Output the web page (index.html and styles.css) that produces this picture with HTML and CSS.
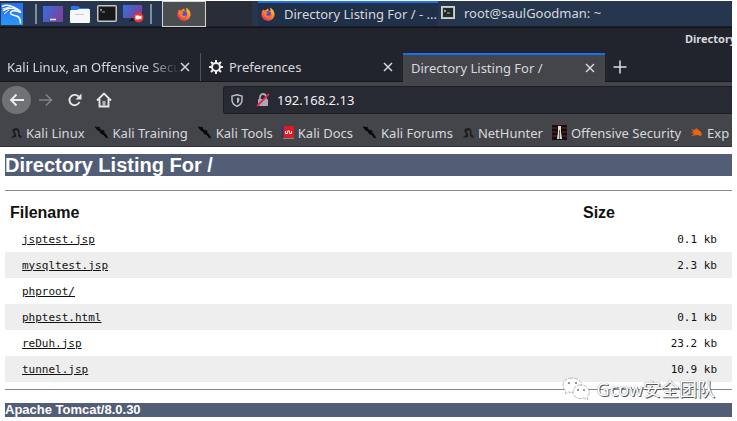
FILE: index.html
```html
<!DOCTYPE html>
<html lang="en">
<head>
<meta charset="utf-8">
<title>Directory Listing For /</title>
<link rel="stylesheet" href="styles.css">
</head>
<body>
<svg class="defs" aria-hidden="true">
  <defs>
    <linearGradient id="screen" x1="0" y1="0" x2="1" y2="0.4"><stop offset="0" stop-color="#3470e0"/><stop offset="1" stop-color="#77459f"/></linearGradient>
    <linearGradient id="kali" x1="0" y1="0" x2="0" y2="1"><stop offset="0" stop-color="#2370ee"/><stop offset="1" stop-color="#2b96fa"/></linearGradient>
    <linearGradient id="flame" x1="1" y1="0" x2="0.2" y2="1"><stop offset="0" stop-color="#ffd83d"/><stop offset="0.45" stop-color="#ff8a25"/><stop offset="1" stop-color="#ef2858"/></linearGradient>
    <symbol id="firefox" viewBox="0 0 14 14"><path d="M2.2 2.5 3.5 3.4 5.2 2.8 7.2 1.2 7.5 3.4 9.5 4.1 9.2.5C12 2 13.8 5 13.6 7.8 13.2 11.5 10.4 13.8 7 13.8 3.4 13.8.4 11 .4 7.3.4 5.4 1.2 3.7 2.2 2.5Z" fill="url(#flame)"/><circle cx="7.2" cy="6.9" r="2.8" fill="#604bc8"/><path d="M2.4 5.2c1.2-.8 2.7-.4 4.3.6L5.2 7c-.4 1.6 1.5 2.6 3.8 1.3-.7 2.3-3.2 2.8-4.9 1.4C2.6 8.5 2.1 6.8 2.4 5.2Z" fill="#ff812d"/></symbol>
    <symbol id="close" viewBox="0 0 10 10"><path d="m1 1 8 8M9 1 1 9" stroke="#d5d6d8" stroke-width="1.5"/></symbol>
    <symbol id="knife" viewBox="0 0 16 16"><path d="m.5 1.5 4 .6L6 4l2 1 1 2 3 2 1.500 2 1.800 3-2.800-.5L10 10.500 7.500 9.500 6 7 3.500 5.500Z" fill="#08090b"/><path d="m5 2 1 2M9 5.500l2 2M10 10l2-1M8 7l4 4" stroke="#08090b" stroke-width="1.500"/></symbol>
    <symbol id="dragon" viewBox="0 0 12 13"><path d="M2 4.500C3.500 2 6 1.200 8 2.500c2 1.500 1.500 4 1.500 6L12 10.500 10.500 12 8 10V6C7.800 3.800 5.500 3.500 4.500 5.500L6 8v3L0 12l3-2 1-2Z" fill="#1b1d21"/></symbol>
  </defs>
</svg>
<div class="desktop">
  <nav class="taskbar" aria-label="Desktop panel">
    <button class="launcher menu" aria-label="Applications"><svg width="22" height="22" viewBox="0 0 22 22"><rect width="22" height="22" fill="url(#kali)"/><path d="M1 3.500C5 1.500 9 2 12 4M2 8C6 4.500 10 5 13 5.500l4 1 3 3-4.500-1.500C11 7 8.500 9 10 11c2 2.200 6 .5 8 3.500 1.500 2 1.500 4 1.500 6" fill="none" stroke="#fff" stroke-width="1.500"/><path d="M1.500 6 9 3.800M3 11l5-4" fill="none" stroke="#fff"/><path d="m11 2.500 4 2 4.500 3.500-6-1.500Z" fill="#fff"/></svg></button>
    <span class="rule"></span>
    <button class="launcher" aria-label="Show desktop"><svg width="20" height="16"><rect width="20" height="16" fill="url(#screen)"/><path d="M7 13.500h6" stroke="#e7eafa" stroke-width="1.500"/></svg></button>
    <button class="launcher" aria-label="Files"><svg width="20" height="18"><path d="M1 8V2q0-1 1-1h6l2 2h9v5" fill="#2d73ef"/><path d="M0 6q0-1 1-1h6l2-1h10q1 0 1 1v12q0 1-1 1H1q-1 0-1-1Z" fill="#f7f7f8"/><path d="M5 9.500h9" stroke="#c7c9cc"/></svg></button>
    <button class="launcher" aria-label="Terminal"><svg width="20" height="17"><rect x=".75" y=".75" width="18.500" height="15.500" rx="1" fill="#171819" stroke="#c5c6c4" stroke-width="1.500"/><path d="m3 4 2 1-2 1M5 7h3" stroke="#a1a3a2" fill="none"/></svg></button>
    <button class="launcher" aria-label="Screen recorder"><svg width="21" height="19"><rect y="1" width="19" height="13" fill="url(#screen)"/><path d="M8 14h4v2h3v1H6v-1h2Z" fill="#17191f"/><circle cx="15.500" cy="13.500" r="5" fill="#ee3030"/><path d="M12.500 11.500h4v1l2-1v4l-2-1v1h-4Z" fill="#fff"/></svg></button>
    <span class="rule second-rule"></span>
    <button class="app-tile" aria-label="Firefox"><svg width="14" height="14"><use href="#firefox"/></svg></button>
    <span class="panel-gap"></span>
    <button class="task active"><svg width="14" height="14"><use href="#firefox"/></svg><span>Directory Listing For / - ...</span></button>
    <button class="task terminal"><svg width="14" height="13"><rect x=".5" y=".5" width="13" height="12" fill="#b8bab7" stroke="#d0d2cf"/><rect x="2" y="2" width="10" height="9" fill="#202a2a"/><path d="m3 4 2 1-2 1M6 7h3" stroke="#b5b9b5" fill="none"/></svg><span>root@saulGoodman: ~</span></button>
  </nav>
  <div class="titlebar">Directory</div>
  <div class="tabs">
    <div class="tab first"><span class="tab-title faded">Kali Linux, an Offensive Secu</span><button aria-label="Close Kali Linux tab"><svg width="10" height="10"><use href="#close"/></svg></button></div>
    <div class="tab second"><svg width="14" height="14" viewBox="0 0 14 14"><path d="M7 0v14M0 7h14M2 2l10 10M12 2 2 12" stroke="#eeeeef" stroke-width="2"/><circle cx="7" cy="7" r="4" fill="#23252e" stroke="#eeeeef" stroke-width="2"/></svg><span class="tab-title">Preferences</span><button aria-label="Close Preferences tab"><svg width="10" height="10"><use href="#close"/></svg></button></div>
    <div class="tab selected"><span class="tab-title">Directory Listing For /</span><button aria-label="Close directory tab"><svg width="10" height="10"><use href="#close"/></svg></button></div>
    <button class="new-tab" aria-label="New tab"><svg width="14" height="14"><path d="M7 .5v13M.5 7h13" stroke="#dcddde" stroke-width="1.500"/></svg></button>
  </div>
  <div class="navigation">
    <button class="nav-button back" aria-label="Back"><svg width="16" height="14"><path d="M15 7H2M7.500 1.500 2 7l5.500 5.500" fill="none" stroke="#eeeeef" stroke-width="1.800"/></svg></button>
    <button class="nav-button" aria-label="Forward"><svg width="16" height="14"><path d="M1 7h12M8 1.500 13.500 7 8 12.500" fill="none" stroke="#818388" stroke-width="1.600"/></svg></button>
    <button class="nav-button" aria-label="Reload"><svg width="16" height="14"><path d="M11.500 3.500A5.200 5.200 0 1 0 12.500 9" fill="none" stroke="#e5e5e6" stroke-width="1.900"/><path d="M14.500.5v6H8.500Z" fill="#e5e5e6"/></svg></button>
    <button class="nav-button" aria-label="Home"><svg width="16" height="16"><path d="m1 8.500 7-7 7 7M3.500 7v7.500h9V7" fill="none" stroke="#e5e5e6" stroke-width="1.900"/><path d="M6.500 14V9h3v5" fill="#b5b6b8"/></svg></button>
    <div class="address">
      <svg class="shield" width="12" height="13"><path d="M6 .8 11 2v4c0 3-2 5.200-5 6.200C3 11.200 1 9 1 6V2Z" fill="none" stroke="#babbc1" stroke-width="1.500"/><path d="M6 3.500v6c1.700-.8 2.300-2 2.300-3.500V4Z" fill="#babbc1"/></svg>
      <svg class="lock" width="14" height="14"><path d="M4 7V4a3 3 0 0 1 6 0v3" fill="none" stroke="#a9aab0" stroke-width="1.800"/><rect x="2" y="6" width="10" height="7" rx="1" fill="#a9aab0"/><path d="M1 13 13 1" stroke="#e42350" stroke-width="1.800"/></svg>
      <input aria-label="Address" value="192.168.2.13">
    </div>
  </div>
  <nav class="bookmarks" aria-label="Bookmarks">
    <a href="#"><svg width="12" height="13"><use href="#dragon"/></svg>Kali Linux</a>
    <a href="#"><svg width="15" height="15"><use href="#knife"/></svg>Kali Training</a>
    <a href="#"><svg width="15" height="15"><use href="#knife"/></svg>Kali Tools</a>
    <a href="#"><svg width="12" height="15"><path d="M0 1h12v13H0Z" fill="#dc1c21"/><path d="M0 1h1.500v13H0" fill="#25347c"/><path d="M1 13.500h11" stroke="#858489"/><path d="M3.500 6v2.500h2V6h2v2.500h2V6" stroke="#fff" fill="none"/></svg>Kali Docs</a>
    <a href="#"><svg width="15" height="15"><use href="#knife"/></svg>Kali Forums</a>
    <a href="#"><svg width="12" height="13"><use href="#dragon"/></svg>NetHunter</a>
    <a href="#"><svg width="15" height="15"><rect width="15" height="15" fill="#190b0c"/><path d="M0 3h5M10 3h5M0 7h5M10 7h5M0 11h5M10 11h5" stroke="#5c3031"/><path d="M6 1h3v6l1 7H5l1-7Z" fill="#e0ded8"/><path d="M7.500 5v9" stroke="#625e5b"/></svg>Offensive Security</a>
    <a href="#"><svg width="13" height="13"><path d="m1 3 4 1 1-2 4 3 2 3-1 2-4-1-6 1 3-2-3-2 3-.5Z" fill="#ee630e"/></svg>Exp</a>
  </nav>
  <main>
    <h1>Directory Listing For /</h1>
    <hr>
    <table>
      <thead><tr><th scope="col">Filename</th><th scope="col" class="size">Size</th></tr></thead>
      <tbody>
        <tr><td><a href="#">jsptest.jsp</a></td><td>0.1 kb</td></tr>
        <tr><td><a href="#">mysqltest.jsp</a></td><td>2.3 kb</td></tr>
        <tr><td><a href="#">phproot/</a></td><td></td></tr>
        <tr><td><a href="#">phptest.html</a></td><td>0.1 kb</td></tr>
        <tr><td><a href="#">reDuh.jsp</a></td><td>23.2 kb</td></tr>
        <tr><td><a href="#">tunnel.jsp</a></td><td>10.9 kb</td></tr>
      </tbody>
    </table>
    <hr class="end">
    <h2>Apache Tomcat/8.0.30</h2>
    <div class="watermark"><svg width="29" height="25"><g fill="#fff" stroke="#a7a7a7" stroke-width=".8" stroke-dasharray="4 1"><path d="M10 1C4.500 1 1 4 1 8c0 2.500 1 4.500 3 6l-.5 3 3-2c6 2 13-1.500 13-7 0-4-4-7-9.500-7Z"/><path d="M19 8c-5 0-8 3-8 7 0 5 6 8 11 6l4 2-1-3c5-5 1-12-6-12Z"/></g><g fill="#777"><circle cx="7" cy="6" r="1"/><circle cx="14" cy="6" r="1"/><circle cx="16" cy="13" r="1"/><circle cx="22" cy="13" r="1"/></g></svg><span>Gcow安全团队</span></div>
  </main>
</div>
</body>
</html>
```
FILE: styles.css
```css
* { box-sizing: border-box; }
body { margin: 0; background: #fff; font-family: "Noto Sans", sans-serif; font-size: 13px; color: #d7d8da; }
button { border: 0; padding: 0; margin: 0; background: none; color: inherit; font: inherit; display: flex; align-items: center; }
a { color: inherit; }
svg { display: block; flex: none; }
.defs { position: absolute; width: 0; height: 0; }
.desktop { margin: 1px 5px 0 0; overflow: hidden; }

.taskbar { display: flex; align-items: center; height: 26px; border-bottom: 1px solid #1b202b; background: #26364f; }
.launcher { justify-content: center; width: 27px; height: 24px; flex: none; }
.menu { width: 24px; }
.rule { width: 2px; height: 20px; margin: 0 2px 0 11px; background: #858c98; flex: none; }
.second-rule { margin: 0 10px 0 3px; }
.app-tile { width: 44px; height: 26px; justify-content: center; border: 1px solid #d5d5d5; background: #4b4d50; flex: none; }
.panel-gap { width: 46px; align-self: stretch; background: #292d38; flex: none; margin-right: 6px; }
.task { align-self: stretch; font-size: 13px; white-space: nowrap; }
.active { width: 180px; padding: 0 0 2px 3px; gap: 9px; border-top: 2px solid #1b71ee; background: #213049; flex: none; }
.terminal { padding: 0 0 2px 3px; gap: 9px; }

.titlebar { height: 26px; padding: 2px 0 0 685px; border-top: 1px solid #111319; background: #22242d; font-size: 11px; line-height: 18px; font-weight: bold; white-space: nowrap; }
.tabs { display: flex; height: 29px; border-bottom: 1px solid #14161c; background: #22242d; }
.tab { display: flex; align-items: center; flex: none; padding: 0 10px 0 8px; }
.first { width: 200px; padding-left: 7px; }
.second { width: 203px; gap: 6px; border-left: 1px solid #51535a; }
.selected { width: 202px; height: 29px; border-top: 2px solid #1b6eee; background: #43454b; padding-bottom: 2px; }
.tab-title { flex: 1; overflow: hidden; white-space: nowrap; }
.faded { -webkit-mask-image: linear-gradient(to right, #000 82%, transparent); mask-image: linear-gradient(to right, #000 82%, transparent); }
.new-tab { width: 30px; justify-content: center; }

.navigation { display: flex; align-items: center; height: 37px; padding: 0 0 1px 2px; background: #43454b; }
.nav-button { width: 29px; height: 28px; justify-content: center; flex: none; }
.back { border-radius: 50%; background: #707276; }
.address { display: flex; align-items: center; flex: 1; height: 28px; margin-left: 105px; border: 1px solid #1c1e25; border-right: 0; border-radius: 3px 0 0 3px; background: #272933; }
.shield { margin: 0 6px 0 7px; }
.lock { margin-left: 7px; }
input { flex: 1; min-width: 0; padding: 0; margin-left: 7px; border: 0; outline: 0; background: none; color: #f0f0f1; font: inherit; }

.bookmarks { display: flex; align-items: center; gap: 9px; height: 28px; padding-left: 10px; border-bottom: 1px solid #303239; background: #43454b; }
.bookmarks a { display: flex; align-items: center; gap: 4px; text-decoration: none; white-space: nowrap; }

main { position: relative; padding: 7px 0 0 5px; background: #fff; color: #111; font-family: "Liberation Sans", sans-serif; }
h1, h2 { margin: 0; background: #525d76; color: #fff; }
h1 { font-size: 20px; line-height: 22px; }
h2 { font-size: 13px; line-height: 14px; }
hr { height: 1px; margin: 14px 0 8px; border: 0; background: #888; }
table { width: 100%; border-collapse: collapse; }
th { height: 27px; padding: 0 5px; font-size: 16px; text-align: left; }
.size { width: 154px; }
td { height: 26px; padding: 0 15px 0 17px; font-family: "DejaVu Sans Mono", monospace; font-size: 11px; }
td:last-child { text-align: right; }
tbody tr:nth-child(even) { background: #eee; }
hr.end { margin: 7px 0 13px; }
.watermark { position: absolute; right: 17px; bottom: 15px; display: flex; align-items: center; gap: 6px; color: #fff; font-family: "Noto Sans", "Noto Sans CJK SC", sans-serif; font-size: 18px; line-height: 26px; text-shadow: 1px 1px 0 #555, 0 0 1px #777; }
```
